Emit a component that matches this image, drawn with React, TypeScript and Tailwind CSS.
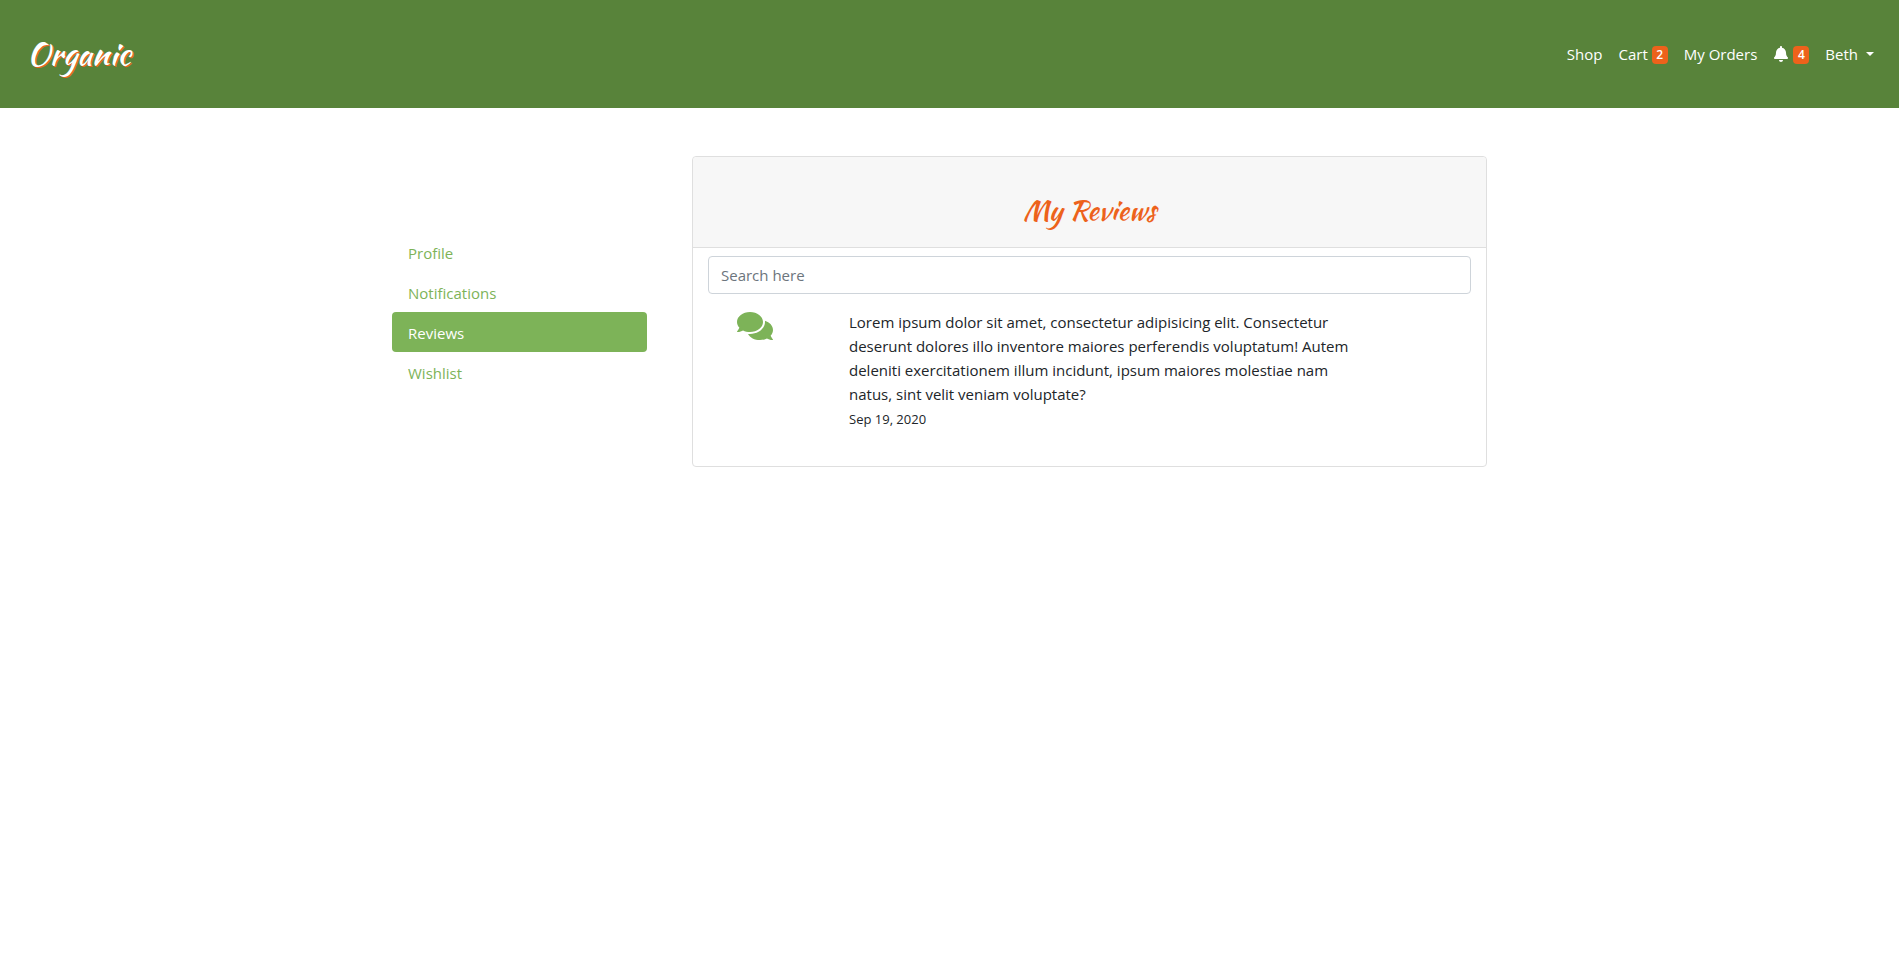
import { FaBell, FaComments } from "react-icons/fa";

const sections = ["Profile", "Notifications", "Reviews", "Wishlist"];

const reviews = [
  {
    text: "Lorem ipsum dolor sit amet, consectetur adipisicing elit. Consectetur deserunt dolores illo inventore maiores perferendis voluptatum! Autem deleniti exercitationem illum incidunt, ipsum maiores molestiae nam natus, sint velit veniam voluptate?",
    date: "Sep 19, 2020",
  },
];

function Badge({ count }: { count: number }) {
  return (
    <span className="mt-0.5 flex h-[18px] w-4 items-center justify-center rounded bg-[#ed621b] text-xs font-semibold leading-none">
      {count}
    </span>
  );
}

function Header() {
  return (
    <header className="flex h-[108px] items-center justify-between bg-[#58833a] pr-[25px] pl-[27px] text-white">
      <a
        href="#home"
        className="font-['Kaushan_Script',cursive] text-[32px] leading-10 [text-shadow:1px_1px_0_#ed621b]"
      >
        Organic
      </a>
      <nav className="flex items-center gap-4">
        <a href="#shop">Shop</a>
        <a href="#cart" className="flex items-center gap-1">
          Cart <Badge count={2} />
        </a>
        <a href="#orders">My Orders</a>
        <a href="#notifications" aria-label="Notifications" className="flex items-center gap-1">
          <FaBell className="h-4 w-4" />
          <Badge count={4} />
        </a>
        <button type="button" className="flex items-center gap-2">
          Beth
          <svg className="h-1 w-2" viewBox="0 0 8 4" fill="currentColor" aria-hidden="true">
            <path d="M0 0h8L4 4z" />
          </svg>
        </button>
      </nav>
    </header>
  );
}

function SideNav() {
  return (
    <nav className="mt-[76px] flex w-[255px] shrink-0 flex-col">
      {sections.map((name) => (
        <a
          key={name}
          href={`#${name.toLowerCase()}`}
          className={
            name === "Reviews"
              ? "rounded bg-[#7db358] px-4 pt-[9px] pb-[7px] text-white"
              : "rounded px-4 pt-[9px] pb-[7px] text-[#7db358]"
          }
        >
          {name}
        </a>
      ))}
    </nav>
  );
}

export default function App() {
  return (
    <div className="bg-white font-['Segoe_UI','Open_Sans',sans-serif] text-[15px] leading-6 text-[#212529]">
      <Header />
      <main className="mx-auto flex max-w-[1115px] items-start gap-[45px] pt-12 pr-5">
        <SideNav />
        <section className="min-w-0 flex-1 rounded border border-[#dfdfdf] pb-[35px]">
          <div className="flex h-[91px] items-end justify-center rounded-t border-b border-[#dfdfdf] bg-[#f7f7f7] pb-[17px]">
            <h1 className="font-['Kaushan_Script',cursive] text-[28px] leading-10 text-[#ed621b]">
              My Reviews
            </h1>
          </div>
          <div className="px-[15px] pt-2">
            <input
              type="search"
              aria-label="Search reviews"
              placeholder="Search here"
              className="h-[38px] w-full rounded border border-[#ced4da] px-3 placeholder:text-[#6c757d]"
            />
            {reviews.map((review) => (
              <article key={review.date} className="mt-4 flex pl-[29px]">
                <div className="w-28 shrink-0">
                  <FaComments className="h-8 w-9 text-[#7db358]" />
                </div>
                <div className="max-w-[510px]">
                  <p>{review.text}</p>
                  <time dateTime="2020-09-19" className="block pt-px text-[13px] leading-6">
                    {review.date}
                  </time>
                </div>
              </article>
            ))}
          </div>
        </section>
      </main>
    </div>
  );
}
